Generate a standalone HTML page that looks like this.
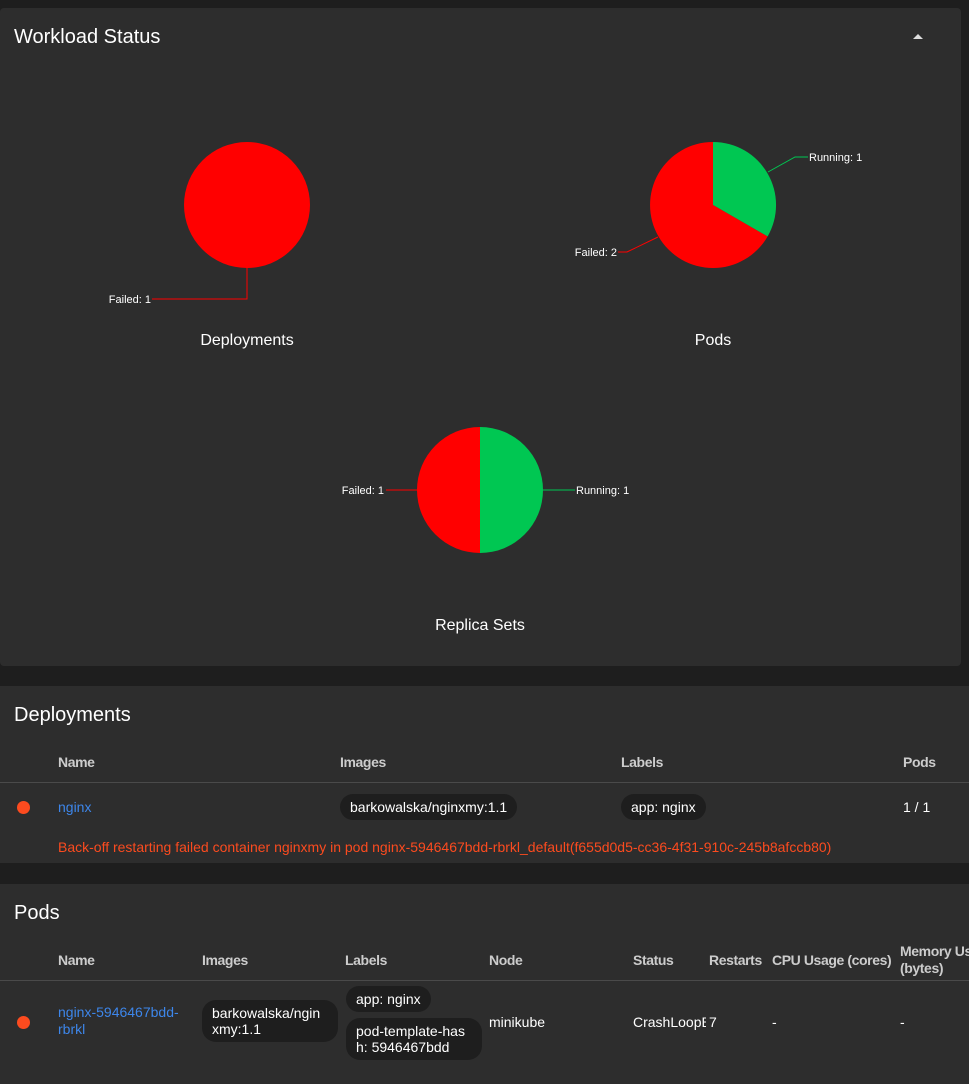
<!DOCTYPE html>
<html><head><style>
body{margin:0;background:#1e1e1e;font-family:"Liberation Sans",sans-serif;color:#fff;width:969px;height:1048px;overflow:hidden;position:relative}
.card{position:absolute;background:#2d2d2d;border-radius:4px}
.t{position:absolute;font-size:20px;color:#fff}
.h{position:absolute;font-size:14px;font-weight:bold;color:#ccc;letter-spacing:-0.4px}
.c{position:absolute;font-size:14px;color:#fff}
.chip{position:absolute;background:#1e1e1e;border-radius:14px;font-size:14px;color:#fff;padding:5px 10px;box-sizing:border-box}
.dot{position:absolute;width:13px;height:13px;border-radius:50%;background:#fc4b1f}
a{color:#3d86ea}
</style></head><body>
<div class="card" style="left:0;top:8px;width:961px;height:658px">
<div class="t" style="left:14px;top:18px">Workload Status</div>
<div style="position:absolute;left:913px;top:26px;width:0;height:0;border-left:5px solid transparent;border-right:5px solid transparent;border-bottom:5px solid #ddd"></div>
</div>
<svg style="position:absolute;left:0;top:0" width="969" height="666" font-family="Liberation Sans,sans-serif" font-size="11" fill="#fff">
<circle cx="247" cy="205" r="63" fill="#ff0000"/>
<polyline points="247,268 247,299 152,299" fill="none" stroke="#ff0000"/>
<text x="151" y="303" text-anchor="end">Failed: 1</text>
<text x="247" y="345" text-anchor="middle" font-size="16">Deployments</text>
<path d="M713,205 L713,142 A63,63 0 0 1 767.6,236.5 Z" fill="#00c752"/>
<path d="M713,205 L767.6,236.5 A63,63 0 1 1 713,142 Z" fill="#ff0000"/>
<polyline points="768,172 795,157 808,157" fill="none" stroke="#00c752"/>
<text x="809" y="161">Running: 1</text>
<polyline points="658,237 627,252 618,252" fill="none" stroke="#ff0000"/>
<text x="617" y="256" text-anchor="end">Failed: 2</text>
<text x="713" y="345" text-anchor="middle" font-size="16">Pods</text>
<path d="M480,490 L480,427 A63,63 0 0 1 480,553 Z" fill="#00c752"/>
<path d="M480,490 L480,553 A63,63 0 0 1 480,427 Z" fill="#ff0000"/>
<line x1="417" y1="490" x2="386" y2="490" stroke="#ff0000"/>
<text x="384" y="494" text-anchor="end">Failed: 1</text>
<line x1="543" y1="490" x2="575" y2="490" stroke="#00c752"/>
<text x="576" y="494">Running: 1</text>
<text x="480" y="630" text-anchor="middle" font-size="16">Replica Sets</text>
</svg>

<div class="card" style="left:0;top:686px;width:969px;height:177px;border-radius:0">
<div class="t" style="left:14px;top:18px">Deployments</div>
<div class="h" style="left:58px;top:68px">Name</div>
<div class="h" style="left:340px;top:68px">Images</div>
<div class="h" style="left:621px;top:68px">Labels</div>
<div class="h" style="left:903px;top:68px">Pods</div>
<div style="position:absolute;left:0;top:96px;width:969px;height:1px;background:#4a4a4a"></div>
<div class="dot" style="left:17px;top:115px"></div>
<div class="c" style="left:58px;top:113px"><a>nginx</a></div>
<div class="chip" style="left:340px;top:108px;height:26px">barkowalska/nginxmy:1.1</div>
<div class="chip" style="left:621px;top:108px;height:26px">app: nginx</div>
<div class="c" style="left:903px;top:113px">1 / 1</div>
<div class="c" style="left:58px;top:153px;color:#fc4b1f">Back-off restarting failed container nginxmy in pod nginx-5946467bdd-rbrkl_default(f655d0d5-cc36-4f31-910c-245b8afccb80)</div>
</div>

<div class="card" style="left:0;top:884px;width:969px;height:200px;border-radius:0">
<div class="t" style="left:14px;top:18px">Pods</div>
<div class="h" style="left:58px;top:68px">Name</div>
<div class="h" style="left:202px;top:68px">Images</div>
<div class="h" style="left:345px;top:68px">Labels</div>
<div class="h" style="left:489px;top:68px">Node</div>
<div class="h" style="left:633px;top:68px">Status</div>
<div class="h" style="left:709px;top:68px">Restarts</div>
<div class="h" style="left:772px;top:68px">CPU Usage (cores)</div>
<div class="h" style="left:900px;top:59px;line-height:17px;white-space:nowrap">Memory Us<br>(bytes)</div>
<div style="position:absolute;left:0;top:96px;width:969px;height:1px;background:#4a4a4a"></div>
<div class="dot" style="left:17px;top:132px"></div>
<div class="c" style="left:58px;top:120px;line-height:17px"><a>nginx-5946467bdd-<br>rbrkl</a></div>
<div class="chip" style="left:202px;top:116px;width:136px;height:42px;line-height:16px;border-radius:14px">barkowalska/ngin<br>xmy:1.1</div>
<div class="chip" style="left:346px;top:102px;height:26px">app: nginx</div>
<div class="chip" style="left:346px;top:134px;width:136px;height:42px;line-height:16px">pod-template-has<br>h: 5946467bdd</div>
<div class="c" style="left:489px;top:130px">minikube</div>
<div class="c" style="left:633px;top:130px;width:73px;overflow:hidden;white-space:nowrap">CrashLoopBackOff</div>
<div class="c" style="left:709px;top:130px">7</div>
<div class="c" style="left:772px;top:130px">-</div>
<div class="c" style="left:900px;top:130px">-</div>
</div>
</body></html>
